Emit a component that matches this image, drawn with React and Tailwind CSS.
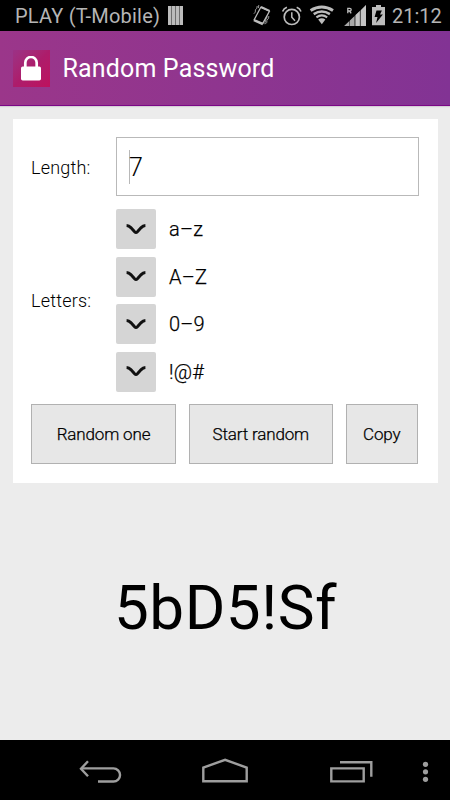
const charsets = ['a–z', 'A–Z', '0–9', '!@#'];

function StatusBar() {
  return (
    <div className="flex h-[31px] items-center bg-black pl-[15px] text-[20px] leading-none text-[#b5b5b5]">
      <span className="w-[153px] whitespace-nowrap tracking-[0.2px]">PLAY (T-Mobile)</span>
      <svg className="h-[31px] w-[16px]" viewBox="168 0 16 31">
        <path d="M168 6h15v19h-15z" fill="#6e6e6e" />
        <path d="M168 6h3v19h-3zM172 6h3v19h-3zM176 6h3v19h-3zM180 6h3v19h-3z" fill="#bcbcbc" />
      </svg>
      <svg className="ml-[68px] h-[31px] w-[134px]" viewBox="252 0 134 31" fill="none" stroke="#bcbcbc">
        {/* vibrate */}
        <path d="M260.8 7.3L269.4 11.2L262.8 23.3L254.2 19.7Z" strokeWidth="1.3" />
        <path d="M261 6.9l8.6 3.9M253.8 20.3l9 4" strokeWidth="2" />
        <path d="M257.2 6l-.3 2.2-1.5 1.6-.1 2.3-1.5 1.7M258.8 5l-.4 3M268.8 16l-.2 2.4-1.7 1.8-.1 2.2-1.7 1.8M267 16.3l-.2 2-1.4 1.8-.1 2-1.4 1.7" strokeWidth=".8" />
        {/* alarm */}
        <circle cx="291.8" cy="16.9" r="7.6" strokeWidth="1.7" />
        <path d="M291.8 12.2v5.1l3.2 3.5" strokeWidth="1.5" />
        <path d="M282.6 11.4c.7-2 2.3-3.5 4.3-4.2M301 11.4c-.7-2-2.3-3.5-4.3-4.2" strokeWidth="1.6" />
        {/* wifi */}
        <path d="M310.6 10.6Q321.8 3.6 333 10.6" strokeWidth="3" />
        <path d="M313.7 14.1Q321.8 8.8 329.9 14.1" strokeWidth="2.5" />
        <path d="M316.4 17.3Q321.8 13.6 327.2 17.3" strokeWidth="2.2" />
        <path d="M318.2 19.6Q321.8 17 325.4 19.6L321.8 24.3Z" fill="#bcbcbc" stroke="none" />
        {/* signal, roaming */}
        <path d="M344.2 26L366 5v21z" fill="#555" stroke="none" />
        <path d="M344.2 26l4.8-4.6V26zM350 20.5l4.2-4V26H350z" fill="#a8a8a8" stroke="none" />
        <path d="M355.6 15.1l4.2-4V26h-4.2zM361 9.9l5-4.9v21h-5z" fill="#c4c4c4" stroke="none" />
        <path d="M347.8 13.3V8.4h2q1.4 0 1.4 1.3t-1.4 1.3h-1.6M349.5 11l1.7 2.3" strokeWidth="1.3" />
        {/* charging battery */}
        <path d="M376 5h5v2h4v18.3h-13V7h4z" fill="#bcbcbc" stroke="none" />
        <path d="M376.5 10.4h5.4l-1.9 4.2h2.9l-6.8 8.5 1.4-6h-2.9z" fill="#000" stroke="none" />
      </svg>
      <span className="ml-[6px]">21:12</span>
    </div>
  );
}

function ActionBar() {
  return (
    <header className="flex h-[75px] items-center border-b border-[#7b0786] bg-gradient-to-r from-[#9b368a] to-[#823394] pl-[13px] shadow-[0_1px_1px_#d5d0d6]">
      <div className="flex h-[37px] w-[37px] items-center justify-center bg-gradient-to-br from-[#9b3186] via-[#ad1c6b] to-[#be105e]">
        <svg className="mr-[1px] h-[25px] w-[20px]" viewBox="0 0 20 25" fill="none">
          <path d="M4.3 11V6.7a5.7 5.7 0 0 1 11.4 0V11" stroke="#fff" strokeWidth="2.7" />
          <rect y="10.5" width="20" height="14" rx="1.7" fill="#fff" />
        </svg>
      </div>
      <h1 className="ml-[12.5px] text-[25px] leading-none tracking-[0.15px] text-white">Random Password</h1>
    </header>
  );
}

function CharsetToggle({ label }) {
  return (
    <label className="flex h-10 items-center gap-[13px] text-[20px] font-light tracking-[0.2px] text-black [-webkit-text-stroke:0.25px_#000]">
      <span className="flex h-10 w-10 items-center justify-center rounded-[2px] bg-[#d5d5d5] pt-[1px]">
        <svg className="h-[14px] w-[22px]" viewBox="0 0 22 14" fill="none">
          <path d="M1.6 2.6Q4 2.7 5.8 4.6L9.6 8.8Q11 10.2 12.4 8.8L16.2 4.6Q18 2.7 20.4 2.6" stroke="#111" strokeWidth="3" />
        </svg>
      </span>
      {label}
    </label>
  );
}

function Button({ className, children }) {
  return (
    <button className={`h-[60px] whitespace-nowrap border border-[#b1b1b1] bg-[#e7e7e7] pt-[2px] text-[17px] font-light tracking-[-0.15px] text-black [-webkit-text-stroke:0.25px_#000] ${className}`}>
      {children}
    </button>
  );
}

function NavBar() {
  return (
    <nav className="flex h-[60px] items-center bg-black pl-[78px]">
      <svg className="h-[60px] w-[354px]" viewBox="78 740 354 60" fill="none" stroke="#9e9e9e" strokeWidth="2.4">
        <path d="M98 781.5h15.5a6.5 6.5 0 0 0 0-13.1H81" />
        <path d="M88 761.3l-7 7.4 7 7.6" />
        <path d="M203.3 781.3v-13.7l21.8-7.8 21.6 7.8v13.7z" />
        <path d="M331.3 768.4h32.4v13h-32.4zM340 762.3h31.3v14.4" />
        <g fill="#9e9e9e" stroke="none">
          <circle cx="425.5" cy="764.3" r="2.6" />
          <circle cx="425.5" cy="771.8" r="2.6" />
          <circle cx="425.5" cy="779.3" r="2.6" />
        </g>
      </svg>
    </nav>
  );
}

export default function App() {
  return (
    <div className="flex h-[800px] w-[450px] flex-col overflow-hidden bg-[#ececec] font-[Roboto,sans-serif]">
      <StatusBar />
      <ActionBar />
      <main className="flex flex-1 flex-col px-[12.5px] pt-[13px]">
        <section className="h-[363.5px] bg-white px-[18.5px] pt-[18px]">
          <div className="flex items-center">
            <span className="w-[85px] pt-[2px] text-[18px] font-light tracking-[0.2px] text-black">Length:</span>
            <div className="flex h-[59px] w-[303px] items-center border border-[#b9b9b9] pl-[12px]">
              <span className="h-[34px] w-px bg-[#b8b8b8]" />
              <span className="-ml-px pt-[2px] text-[25px] font-light leading-none text-black">7</span>
            </div>
          </div>
          <div className="mt-[13px] flex items-center">
            <span className="w-[85px] pt-[1px] text-[18px] font-light tracking-[0.2px] text-black">Letters:</span>
            <div className="flex flex-col gap-[7.5px]">
              {charsets.map((label) => (
                <CharsetToggle key={label} label={label} />
              ))}
            </div>
          </div>
          <div className="mt-[12.5px] flex gap-[12.5px]">
            <Button className="w-[145px]">Random one</Button>
            <Button className="w-[144.5px]">Start random</Button>
            <Button className="w-[72.5px]">Copy</Button>
          </div>
        </section>
        <output className="flex flex-1 items-center justify-center pb-[6px] pl-[1px] text-[62px] leading-none tracking-[0.5px] text-black">5bD5!Sf</output>
      </main>
      <NavBar />
    </div>
  );
}
